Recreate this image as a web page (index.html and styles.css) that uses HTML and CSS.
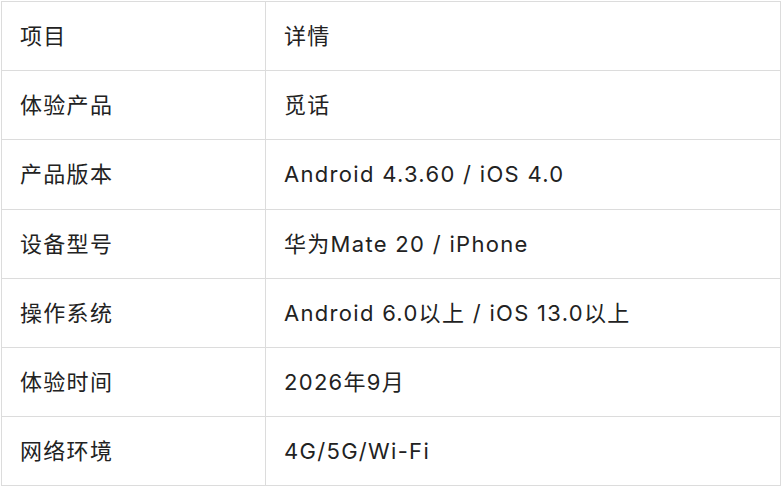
FILE: index.html
```html
<!DOCTYPE html>
<html lang="zh">
<head>
<meta charset="utf-8">
<link rel="stylesheet" href="styles.css">
</head>
<body>
<table class="spec">
  <tr><td class="key">项目</td><td class="val">详情</td></tr>
  <tr><td class="key">体验产品</td><td class="val">觅话</td></tr>
  <tr><td class="key">产品版本</td><td class="val">Android 4.3.60 / iOS 4.0</td></tr>
  <tr><td class="key">设备型号</td><td class="val">华为Mate 20 / iPhone</td></tr>
  <tr><td class="key">操作系统</td><td class="val">Android 6.0以上 / iOS 13.0以上</td></tr>
  <tr><td class="key">体验时间</td><td class="val">2026年9月</td></tr>
  <tr><td class="key">网络环境</td><td class="val">4G/5G/Wi-Fi</td></tr>
</table>
</body>
</html>
```
FILE: styles.css
```css
html, body {
  margin: 0;
  padding: 0;
  background: #fff;
}
body {
  padding: 1px 0 0 1px;
  font-family: Inter, "Noto Sans CJK SC", sans-serif;
  color: #222;
}
.spec {
  border-collapse: collapse;
  width: 780px;
  table-layout: fixed;
}
.spec td {
  border: 1px solid #dcdcdc;
  height: 69.2px;
  padding: 0 18px;
  font-size: 22px;
  line-height: 1;
  letter-spacing: 1.3px;
  vertical-align: middle;
  box-sizing: border-box;
}
.spec .key {
  width: 264px;
}
```
